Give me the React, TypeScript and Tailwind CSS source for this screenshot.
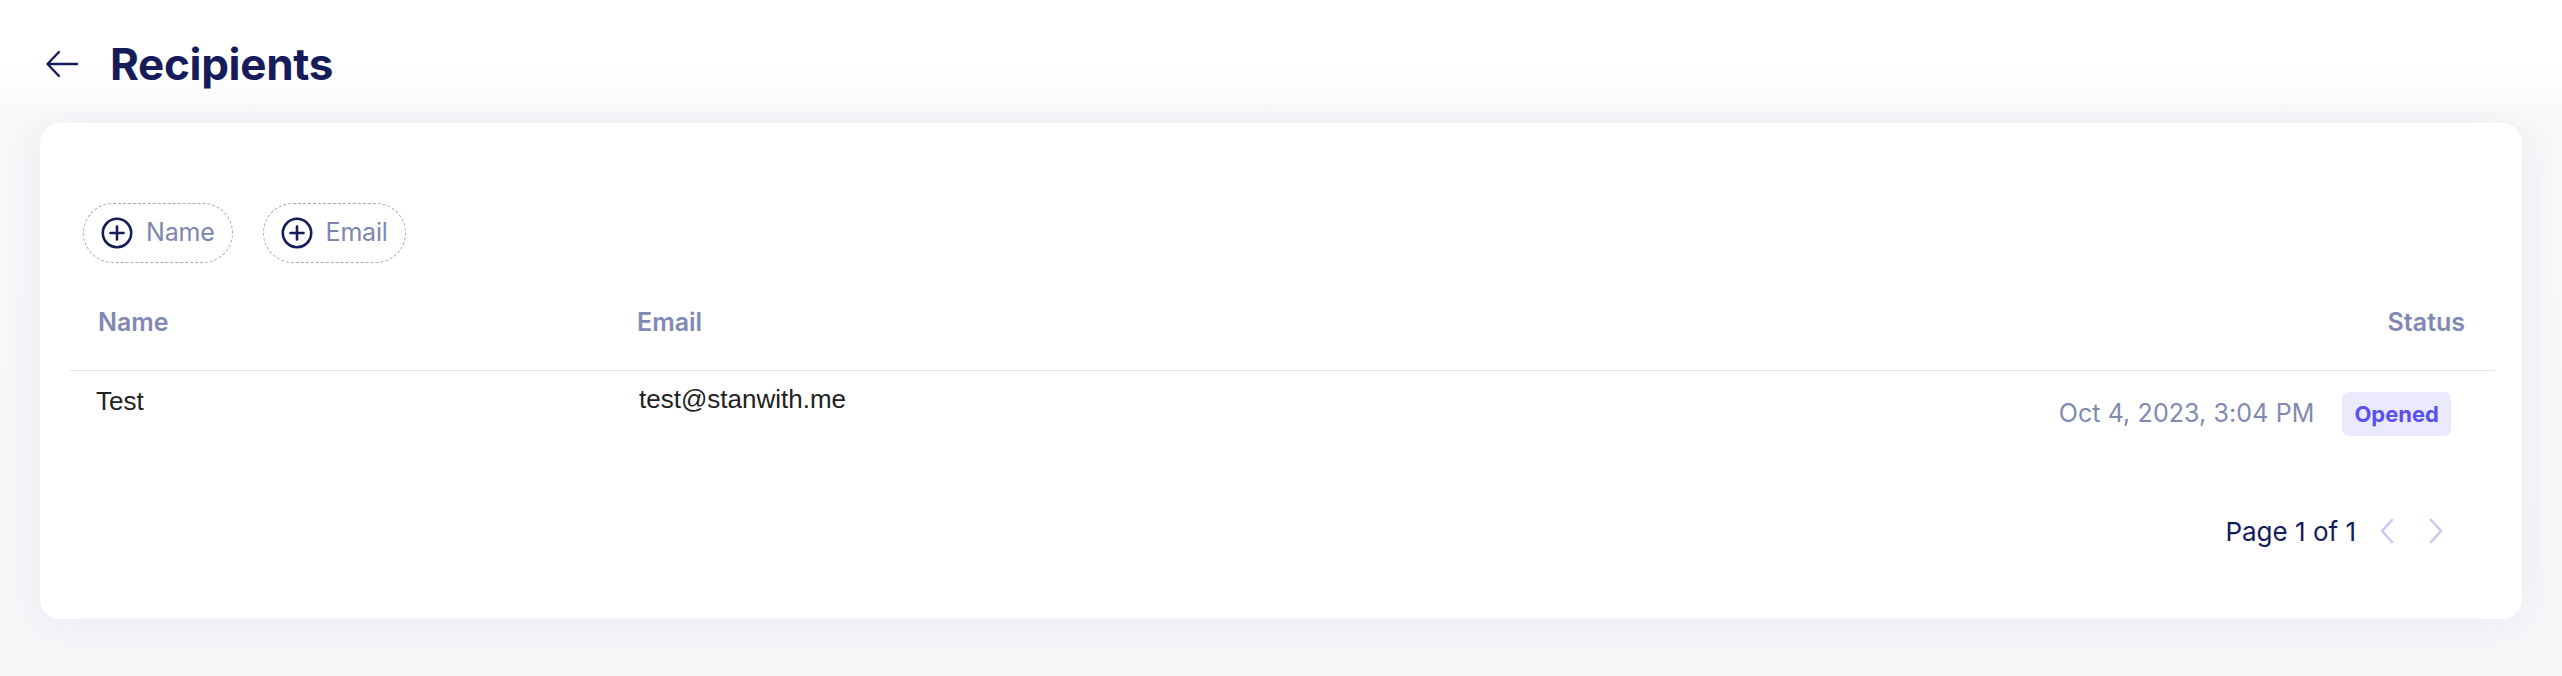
import { FC } from "react";

const sans = "font-['Inter','Noto_Sans',sans-serif]";

const PlusCircle: FC = () => (
  <svg width="32" height="32" viewBox="0 0 32 32" fill="none" className="shrink-0">
    <circle cx="16" cy="16" r="14.2" stroke="#161b5a" strokeWidth="2.6" />
    <path d="M16 9.5v13M9.5 16h13" stroke="#161b5a" strokeWidth="2.6" strokeLinecap="round" />
  </svg>
);

const FilterPill: FC<{ label: string }> = ({ label }) => (
  <button className="flex h-[60px] items-center gap-[13px] rounded-full border border-dashed border-[#a3a8c6] pl-[17px] pr-[17px] text-[25px] tracking-[-0.2px] text-[#7e86b0]">
    <PlusCircle />
    <span>{label}</span>
  </button>
);

const Chevron: FC<{ dir: "left" | "right" }> = ({ dir }) => (
  <svg width="16" height="26" viewBox="0 0 16 26" fill="none">
    <path
      d={dir === "left" ? "M13 2L3 13l10 11" : "M3 2l10 11L3 24"}
      stroke="#c9c6f8"
      strokeWidth="2.6"
      strokeLinecap="round"
      strokeLinejoin="round"
    />
  </svg>
);

export default function App() {
  return (
    <div
      className={`${sans} min-h-screen bg-[linear-gradient(180deg,#ffffff_0px,#ffffff_60px,#f8f8fa_130px,#f7f7fa_100%)] px-[40px] pb-[40px]`}
    >
      <header className="flex h-[123px] items-center gap-[31px] pt-[4px] pl-[5px]">
        <svg width="34" height="28" viewBox="0 0 34 28" fill="none" className="mt-[1px]">
          <path
            d="M32 14H3M14 2L2.5 14 14 26"
            stroke="#161b5a"
            strokeWidth="2.4"
            strokeLinecap="round"
            strokeLinejoin="round"
          />
        </svg>
        <h1 className="text-[44px] font-bold leading-[54px] tracking-[-0.3px] text-[#161b5a]">
          Recipients
        </h1>
      </header>

      <section className="rounded-[20px] bg-white pl-[30px] pr-[28px] pt-[80px] pb-[73px] shadow-[0_4px_40px_rgba(40,40,110,0.07)]">
        <div className="flex gap-[30px] pl-[13px]">
          <FilterPill label="Name" />
          <FilterPill label="Email" />
        </div>

        <div className="mt-[28px] grid grid-cols-[540px_1fr_auto]">
          <div className="border-b border-[#e3e6f0] pl-[28px] pt-[19px] pb-[36px] text-[25px] font-semibold leading-[24px] text-[#8189b3]">
            Name
          </div>
          <div className="border-b border-[#e3e6f0] pl-[27px] pt-[19px] pb-[36px] text-[25px] font-semibold leading-[24px] text-[#8189b3]">
            Email
          </div>
          <div className="border-b border-[#e3e6f0] pr-[29px] pt-[19px] pb-[36px] text-right text-[25px] font-semibold leading-[24px] text-[#8189b3]">
            Status
          </div>

          <div className="pl-[26px] pt-[15px] font-['Liberation_Sans',Arial,sans-serif] text-[26px] leading-[30px] text-[#222222]">
            Test
          </div>
          <div className="pl-[29px] pt-[13px] font-['Liberation_Sans',Arial,sans-serif] text-[26px] leading-[30px] text-[#222222]">
            test@stanwith.me
          </div>
          <div className="flex items-center justify-end gap-[28px] pr-[43px] pt-[21px] pb-[20px]">
            <span className="text-[25px] tracking-[0.1px] text-[#8189b0]">Oct 4, 2023, 3:04 PM</span>
            <span className="flex h-[44px] items-center rounded-[7px] bg-[#ebeafd] px-[12px] text-[22px] font-bold text-[#5a4ff0]">
              Opened
            </span>
          </div>
        </div>

        <div className="mt-[60px] flex h-[30px] items-center justify-end pr-[50px]">
          <span className="text-[26px] text-[#161b5a]">Page 1 of 1</span>
          <button className="ml-[23px] flex items-center">
            <Chevron dir="left" />
          </button>
          <button className="ml-[33px] flex items-center">
            <Chevron dir="right" />
          </button>
        </div>
      </section>
    </div>
  );
}
